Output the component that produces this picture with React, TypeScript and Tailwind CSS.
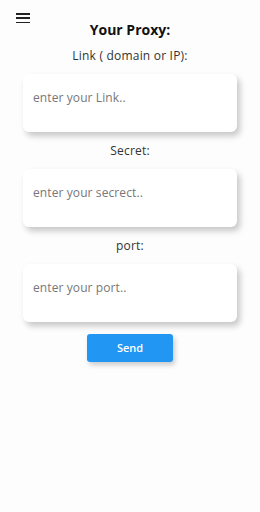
import { useState } from 'react';

const fields = [
  { label: 'Link ( domain or IP):', placeholder: 'enter your Link..' },
  { label: 'Secret:', placeholder: 'enter your secrect..' },
  { label: 'port:', placeholder: 'enter your port..' },
];

export default function App() {
  const [values, setValues] = useState(['', '', '']);

  return (
    <div className="w-[260px] h-[512px] bg-[#fdfdfd] text-[#222] font-['Open_Sans',sans-serif] relative">
      {/* Menu icon */}
      <button className="absolute left-[16px] top-[13px] w-[14px] h-[10px] flex flex-col justify-between">
        <span className="block h-[1.5px] w-full bg-[#222]" />
        <span className="block h-[1.5px] w-full bg-[#222]" />
        <span className="block h-[1.5px] w-full bg-[#222]" />
      </button>

      <div className="flex flex-col items-center pt-[20px]">
        <h1 className="text-[14px] leading-[19px] font-bold text-[#111]">Your Proxy:</h1>

        {fields.map((f, i) => (
          <div key={f.label} className="flex flex-col items-center w-full">
            <label className={`text-[12px] leading-[15px] tracking-[0.2px] text-[#333] ${i === 0 ? 'mt-[9px]' : 'mt-[11px]'}`}>
              {f.label}
            </label>
            <div className="mt-[11px] w-[214px] h-[58px] bg-white rounded-[6px] shadow-[3px_4px_6px_rgba(0,0,0,0.22)] px-[10px] pt-[10px]">
              <input
                value={values[i]}
                onChange={(e) => {
                  const next = [...values];
                  next[i] = e.target.value;
                  setValues(next);
                }}
                placeholder={f.placeholder}
                className="w-full bg-transparent outline-none text-[12px] leading-[16px] tracking-[0.1px] placeholder:text-[#777]"
              />
            </div>
          </div>
        ))}

        <button className="mt-[12px] w-[86px] h-[28px] bg-[#2196f3] rounded-[3px] text-white text-[11px] font-semibold shadow-[2px_3px_5px_rgba(0,0,0,0.2)]">
          Send
        </button>
      </div>
    </div>
  );
}
